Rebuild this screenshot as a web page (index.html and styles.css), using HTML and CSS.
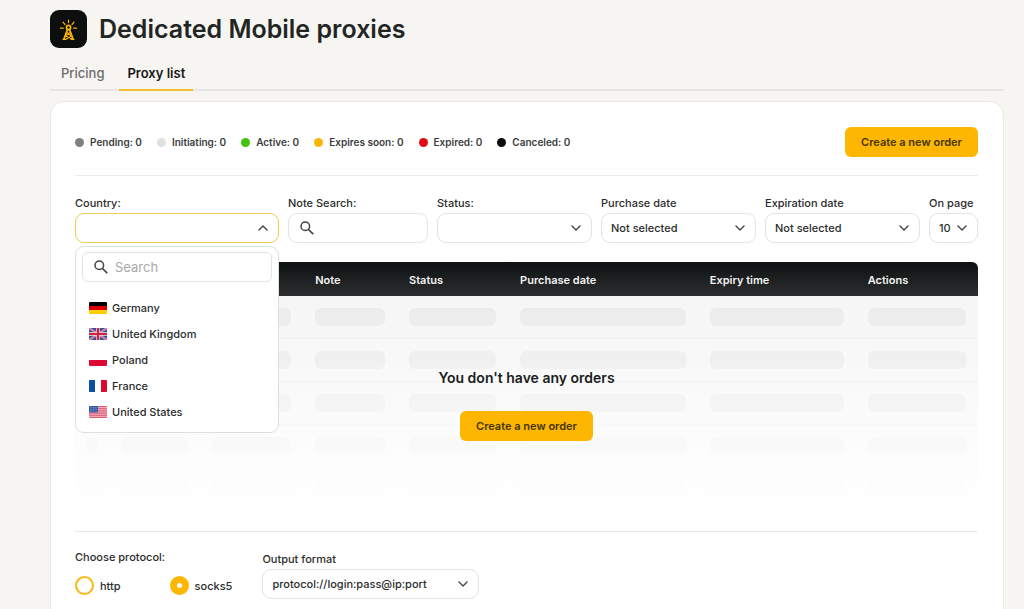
FILE: index.html
```html
<!DOCTYPE html>
<html lang="en">
<head>
<meta charset="utf-8">
<meta name="viewport" content="width=device-width, initial-scale=1">
<title>Dedicated Mobile proxies</title>
<link rel="stylesheet" href="styles.css">
</head>
<body>
<svg class="sprite" aria-hidden="true">
  <symbol id="chevron" viewBox="0 0 12 12"><path d="M2 4l4 4 4-4" fill="none" stroke="currentColor" stroke-width="1.4" stroke-linecap="round" stroke-linejoin="round"/></symbol>
  <symbol id="search" viewBox="0 0 14 14"><circle cx="5.3" cy="5.3" r="4.3" fill="none" stroke="currentColor" stroke-width="1.5"/><path d="M8.5 8.5l4.7 4.7" stroke="currentColor" stroke-width="1.7" fill="none"/></symbol>
</svg>
<main class="page">
  <header class="page-header">
    <span class="logo">
      <svg viewBox="0 0 37 37" fill="none" stroke="#fbb50a" stroke-width="1.2" stroke-linecap="round">
        <circle cx="18.5" cy="16.500" r="2.1" stroke-width="1.7"/>
        <path d="M17.5 18.500L14 28M19.5 18.500L23 28" stroke-width="1.8"/>
        <path d="M17 21.500l4.500 3.500M20 21.500L15.500 25l6.500 2.800M13 28.400h3M21 28.400h3M16.500 28l5-3" stroke-width="1.1"/>
        <path d="M18.500 9v2.600M13 11.200l2 2.300M24 11.200l-2 2.300M10.500 17.200h2.800M23.700 17.200h2.800"/>
      </svg>
    </span>
    <h1>Dedicated Mobile proxies</h1>
  </header>

  <nav class="tabs">
    <a class="tab" href="#pricing">Pricing</a>
    <a class="tab tab-active" href="#list" aria-current="page">Proxy list</a>
  </nav>

  <section class="card">
    <div class="summary">
      <ul class="legend">
        <li><i class="dot pending"></i>Pending: 0</li>
        <li><i class="dot initiating"></i>Initiating: 0</li>
        <li><i class="dot active"></i>Active: 0</li>
        <li><i class="dot soon"></i>Expires soon: 0</li>
        <li><i class="dot expired"></i>Expired: 0</li>
        <li><i class="dot canceled"></i>Canceled: 0</li>
      </ul>
      <button class="primary" type="button">Create a new order</button>
    </div>

    <form class="filters">
      <div class="field">
        <label for="country">Country:</label>
        <div class="control">
          <select id="country" class="open"><option></option></select>
          <svg class="chevron up"><use href="#chevron"/></svg>
          <div class="menu">
            <div class="control">
              <input id="country-search" class="menu-search" type="search" placeholder="Search" aria-label="Search country">
              <svg class="search-icon"><use href="#search"/></svg>
            </div>
            <ul class="countries">
              <li><button type="button"><svg class="flag" viewBox="0 0 18 12"><path fill="#000" d="M0 0h18v4H0z"/><path fill="#d00" d="M0 4h18v4H0z"/><path fill="#ffce00" d="M0 8h18v4H0z"/></svg>Germany</button></li>
              <li><button type="button"><svg class="flag" viewBox="0 0 18 12"><path fill="#3a4f9c" d="M0 0h18v12H0z"/><path d="M0 0l18 12M18 0L0 12" stroke="#f3dfe6" stroke-width="1.8"/><path d="M0 0l18 12M18 0L0 12" stroke="#d4213d" stroke-width=".8"/><path d="M9 0v12M0 6h18" stroke="#f6e6ea" stroke-width="3.4"/><path d="M9 0v12M0 6h18" stroke="#d4213d" stroke-width="2.200"/></svg>United Kingdom</button></li>
              <li><button type="button"><svg class="flag" viewBox="0 0 18 12"><path fill="#fff" d="M0 0h18v6H0z"/><path fill="#dc0a32" d="M0 6h18v6H0z"/></svg>Poland</button></li>
              <li><button type="button"><svg class="flag" viewBox="0 0 18 12"><path fill="#0b4ea2" d="M0 0h6v12H0z"/><path fill="#fff" d="M6 0h6v12H6z"/><path fill="#dc0a32" d="M12 0h6v12h-6z"/></svg>France</button></li>
              <li><button type="button"><svg class="flag" viewBox="0 0 18 12"><path fill="#f3b9c3" d="M0 0h18v12H0z"/><path d="M0 .5h18M0 2.400h18M0 4.200h18M0 6h18M0 7.800h18M0 9.700h18M0 11.500h18" stroke="#dd5570" stroke-width=".95"/><path fill="#3a5ba8" d="M0 0h9v6.500H0z"/><path d="M1 1.500h7.500M1 3.300h7.500M1 5.100h7.500" stroke="#a9bbe0" stroke-width=".6" stroke-dasharray=".7 .9"/></svg>United States</button></li>
            </ul>
          </div>
        </div>
      </div>
      <div class="field">
        <label for="note">Note Search:</label>
        <div class="control">
          <input id="note" type="text">
          <svg class="search-icon"><use href="#search"/></svg>
        </div>
      </div>
      <div class="field">
        <label for="status">Status:</label>
        <div class="control"><select id="status"><option></option></select><svg class="chevron"><use href="#chevron"/></svg></div>
      </div>
      <div class="field">
        <label for="purchase">Purchase date</label>
        <div class="control"><select id="purchase"><option>Not selected</option></select><svg class="chevron"><use href="#chevron"/></svg></div>
      </div>
      <div class="field">
        <label for="expiration">Expiration date</label>
        <div class="control"><select id="expiration"><option>Not selected</option></select><svg class="chevron"><use href="#chevron"/></svg></div>
      </div>
      <div class="field">
        <label for="on-page">On page</label>
        <div class="control"><select id="on-page"><option>10</option></select><svg class="chevron"><use href="#chevron"/></svg></div>
      </div>
    </form>

    <div class="orders">
      <table>
        <colgroup><col class="c-check"><col class="c-id"><col class="c-country"><col class="c-note"><col class="c-status"><col class="c-purchase"><col class="c-expiry"><col class="c-actions"></colgroup>
        <thead>
          <tr><th></th><th></th><th></th><th>Note</th><th>Status</th><th>Purchase date</th><th>Expiry time</th><th>Actions</th></tr>
        </thead>
        <tbody>
          <tr><td><i></i></td><td><i></i></td><td><i></i></td><td><i></i></td><td><i></i></td><td><i></i></td><td><i></i></td><td><i></i></td></tr>
          <tr><td><i></i></td><td><i></i></td><td><i></i></td><td><i></i></td><td><i></i></td><td><i></i></td><td><i></i></td><td><i></i></td></tr>
          <tr><td><i></i></td><td><i></i></td><td><i></i></td><td><i></i></td><td><i></i></td><td><i></i></td><td><i></i></td><td><i></i></td></tr>
          <tr><td><i></i></td><td><i></i></td><td><i></i></td><td><i></i></td><td><i></i></td><td><i></i></td><td><i></i></td><td><i></i></td></tr>
          <tr><td><i></i></td><td><i></i></td><td><i></i></td><td><i></i></td><td><i></i></td><td><i></i></td><td><i></i></td><td><i></i></td></tr>
        </tbody>
      </table>
      <div class="empty">
        <p>You don't have any orders</p>
        <button class="primary" type="button">Create a new order</button>
      </div>
    </div>

    <form class="output">
      <fieldset>
        <legend>Choose protocol:</legend>
        <div class="radios">
          <label><input type="radio" name="protocol">http</label>
          <label><input type="radio" name="protocol" checked>socks5</label>
        </div>
      </fieldset>
      <div class="field format">
        <label for="format">Output format</label>
        <div class="control"><select id="format"><option>protocol://login:pass@ip:port</option></select><svg class="chevron"><use href="#chevron"/></svg></div>
      </div>
    </form>
  </section>
</main>
</body>
</html>
```

FILE: styles.css
```css
* { box-sizing: border-box; }

body {
  margin: 0;
  background: #f6f5f1;
  color: #2b2d2d;
  font: 500 11px/14px Inter, "Liberation Sans", sans-serif;
}

ul { list-style: none; margin: 0; padding: 0; }
button, input, select { font: inherit; color: inherit; }
.sprite { display: none; }

.page { padding: 10px 20px 24px 50px; }

.page-header { display: flex; align-items: center; gap: 12px; }
.logo { width: 37px; height: 38px; border-radius: 9px; background: #0c0f0e; display: flex; align-items: center; }
.logo svg { width: 37px; height: 37px; }
h1 { margin: 0; font-size: 25px; line-height: 38px; font-weight: 600; color: #222524; }

.tabs { display: flex; gap: 8px; margin-top: 10px; border-bottom: 2px solid #e6e5e2; }
.tab {
  padding: 8px 8px;
  margin-bottom: -2px;
  border-bottom: 2px solid transparent;
  font-size: 13px;
  line-height: 15px;
  color: #6c6d6b;
  text-decoration: none;
}
.tab:first-child { padding: 8px 7px 8px 11px; }
.tab-active { color: #161818; font-weight: 600; border-bottom-color: #f3c02e; }

.card {
  margin-top: 10px;
  padding: 25px 25px 24px 24px;
  background: #fff;
  border: 1px solid #e9e8e5;
  border-radius: 14px;
}

.summary {
  display: flex;
  align-items: center;
  justify-content: space-between;
  padding-bottom: 18px;
  border-bottom: 1px solid #ebebeb;
}
.legend { display: flex; gap: 15px; font-size: 10px; font-weight: 600; color: #3b3d3d; }
.legend li { display: flex; align-items: center; gap: 6px; }
.dot { width: 9px; height: 9px; border-radius: 50%; }
.pending { background: #808080; }
.initiating { background: #e0e0e0; }
.active { background: #40c40c; }
.soon { background: #fbb40a; }
.expired { background: #e30b13; }
.canceled { background: #0c0c0c; }

.primary {
  height: 30px;
  padding: 0 16px;
  border: 0;
  border-radius: 6px;
  background: #fdb602;
  color: #453407;
  font-size: 11px;
  font-weight: 600;
}

.filters {
  display: grid;
  grid-template-columns: 204fr 140fr 155fr 155fr 155fr 49fr;
  gap: 9px;
  padding-top: 20px;
}
.field { display: flex; flex-direction: column; gap: 3px; min-width: 0; }
.field label { white-space: nowrap; }
.control { position: relative; }
select, .control input {
  display: block;
  width: 100%;
  height: 30px;
  padding: 0 9px;
  border: 1px solid #e3e3e3;
  border-radius: 9px;
  background: #fff;
  appearance: none;
  outline: 0;
}
select.open { border-color: #f0cb55; }
.control input { padding-left: 32px; }
.chevron { position: absolute; right: 10px; top: 9px; width: 12px; height: 12px; color: #444; pointer-events: none; }
.up { transform: rotate(180deg); }
.search-icon { position: absolute; left: 12px; top: 8px; width: 14px; height: 14px; color: #444; }

.menu {
  position: absolute;
  z-index: 2;
  top: 33px;
  left: 0;
  right: 0;
  padding: 5px 6px 7px;
  background: #fff;
  border: 1px solid #dedfda;
  border-radius: 9px;
}
.control .menu-search { border-radius: 6px; font-size: 13px; font-weight: 400; }
.menu-search::placeholder { color: #a9a9a9; opacity: 1; }
.countries { padding: 13px 0 0 7px; }
.countries button {
  display: flex;
  align-items: center;
  gap: 5px;
  width: 100%;
  height: 26px;
  padding: 0;
  border: 0;
  background: none;
}
.flag { width: 18px; height: 12px; border-radius: 1px; }

.orders { position: relative; margin-top: 19px; border-bottom: 1px solid #e8e8e8; }
table {
  width: 100%;
  table-layout: fixed;
  border-spacing: 0;
  margin-bottom: 20px;
  border-radius: 6px 6px 0 0;
  overflow: hidden;
}
.c-check { width: 34px; }
.c-id { width: 10.1%; }
.c-country { width: 11.4%; }
.c-note { width: 10.4%; }
.c-status { width: 12.3%; }
.c-purchase { width: 21%; }
.c-expiry { width: 17.5%; }
th { height: 34px; padding: 1px 12px 0; text-align: left; font-weight: 600; color: #f2f2f2; }
thead { background: linear-gradient(#0e1112, #2c2e2f); }
td { height: 43px; padding: 0 12px; background: #f5f5f5; border-bottom: 1px solid #e9e9e9; }
td i { display: block; height: 18px; border-radius: 6px; background: #e9e9e9; }

.empty {
  position: absolute;
  inset: 34px 0 1px;
  display: flex;
  flex-direction: column;
  align-items: center;
  gap: 24px;
  padding-top: 73px;
  background: linear-gradient(rgba(255, 255, 255, .1), rgba(255, 255, 255, .35) 70px, rgba(255, 255, 255, .74) 150px, #fff 215px);
}
.empty p { margin: 0; font-size: 14px; line-height: 18px; font-weight: 600; color: #1b1d1d; }

.output { display: flex; gap: 30px; padding-top: 18px; }
fieldset { margin: 0; padding: 0; border: 0; }
legend { padding: 0; }
.radios { display: flex; gap: 49px; padding-top: 12px; }
.radios label { display: flex; align-items: center; gap: 6px; }
.radios input {
  appearance: none;
  width: 19px;
  height: 19px;
  margin: 0;
  border: 2px solid #fbb917;
  border-radius: 50%;
  background: #fff;
}
.radios input:checked { border-width: 7px; border-color: #fdb602; }
.format { width: 217px; padding-top: 2px; }
```
